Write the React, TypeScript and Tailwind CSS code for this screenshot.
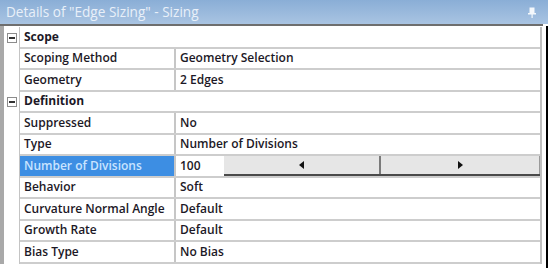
import React from "react";

type Row =
    | { kind: "group"; label: string }
    | { kind: "prop"; label: string; value: string; selected?: boolean; slider?: boolean };

const rows: Row[] = [
    { kind: "group", label: "Scope" },
    { kind: "prop", label: "Scoping Method", value: "Geometry Selection" },
    { kind: "prop", label: "Geometry", value: "2 Edges" },
    { kind: "group", label: "Definition" },
    { kind: "prop", label: "Suppressed", value: "No" },
    { kind: "prop", label: "Type", value: "Number of Divisions" },
    { kind: "prop", label: "Number of Divisions", value: "100", selected: true, slider: true },
    { kind: "prop", label: "Behavior", value: "Soft" },
    { kind: "prop", label: "Curvature Normal Angle", value: "Default" },
    { kind: "prop", label: "Growth Rate", value: "Default" },
    { kind: "prop", label: "Bias Type", value: "No Bias" },
];

function MinusBox() {
    return (
        <div className="w-[10px] h-[10px] border border-[#8c8c8c] bg-white flex items-center justify-center">
            <div className="w-[6px] h-[2px] bg-[#333]" />
        </div>
    );
}

function Slider() {
    return (
        <div className="flex-1 h-full flex border-b-2 border-[#4a4a4a] bg-[#e6e6e6]">
            <div className="w-[157px] flex items-center justify-center border-r-2 border-[#7a7a7a]">
                <span className="w-0 h-0 border-y-[4px] border-y-transparent border-r-[5px] border-r-[#111]" />
            </div>
            <div className="flex-1 flex items-center justify-center border-r border-[#9a9a9a]">
                <span className="w-0 h-0 border-y-[4px] border-y-transparent border-l-[5px] border-l-[#111]" />
            </div>
        </div>
    );
}

export default function App() {
    return (
        <div
            className="w-[548px] h-[268px] bg-white flex flex-col text-[12px] text-[#1c1826] font-semibold whitespace-nowrap"
            style={{ fontFamily: '"Open Sans", "DejaVu Sans", sans-serif' }}
        >
            {/* Title bar */}
            <div className="h-[24px] flex items-center justify-between px-[6px] bg-gradient-to-b from-[#8aaed6] to-[#a9c4e2] text-[#e9f0f9] text-[13.6px] font-normal">
                <span>Details of "Edge Sizing" - Sizing</span>
                <svg width="8" height="11" viewBox="0 0 8 11" className="mr-[6px]">
                    <rect x="1.5" y="0.5" width="5" height="6" fill="#f4f8fc" />
                    <rect x="0" y="6" width="8" height="1.5" fill="#f4f8fc" />
                    <rect x="3.5" y="7" width="1.2" height="4" fill="#f4f8fc" />
                </svg>
            </div>
            <div className="h-[2px] bg-[#6e6e6e] w-[543px]" />

            <div className="flex flex-1">
                <div className="w-[542px] flex flex-col pt-[1px]">
                    <div className="flex">
                        {/* Gutter */}
                        <div className="w-[4px] bg-[#a9a9a9] -mt-[1px]" />
                        <div className="w-[16px] flex flex-col border-r border-[#c4c4c4]">
                            {rows.map((r, i) => (
                                <div key={i} className="h-[21.5px] flex items-center justify-center">
                                    {r.kind === "group" && <MinusBox />}
                                </div>
                            ))}
                        </div>
                        {/* Grid */}
                        <div className="flex-1 flex flex-col border-r-2 border-[#c0c0c0]">
                            {rows.map((r, i) =>
                                r.kind === "group" ? (
                                    <div key={i} className="h-[21.5px] flex items-center px-[4px] border-b-2 border-[#cdcdcd] font-bold">
                                        {r.label}
                                    </div>
                                ) : (
                                    <div key={i} className="h-[21.5px] flex border-b-2 border-[#cdcdcd]">
                                        <div
                                            className={`w-[156px] flex items-center px-[4px] border-r-2 border-[#c6c6c6] ${r.selected ? "bg-[#3d8ee3] text-[#c9e4ff]" : ""
                                                }`}
                                        >
                                            {r.label}
                                        </div>
                                        {r.slider ? (
                                            <div className="flex-1 flex">
                                                <div className="w-[48px] flex items-center px-[4px]">{r.value}</div>
                                                <Slider />
                                            </div>
                                        ) : (
                                            <div className="flex-1 flex items-center px-[4px]">{r.value}</div>
                                        )}
                                    </div>
                                )
                            )}
                        </div>
                    </div>
                </div>
                <div className="w-[4px]" />
                <div className="w-[2px] bg-black" />
            </div>
        </div>
    );
}
